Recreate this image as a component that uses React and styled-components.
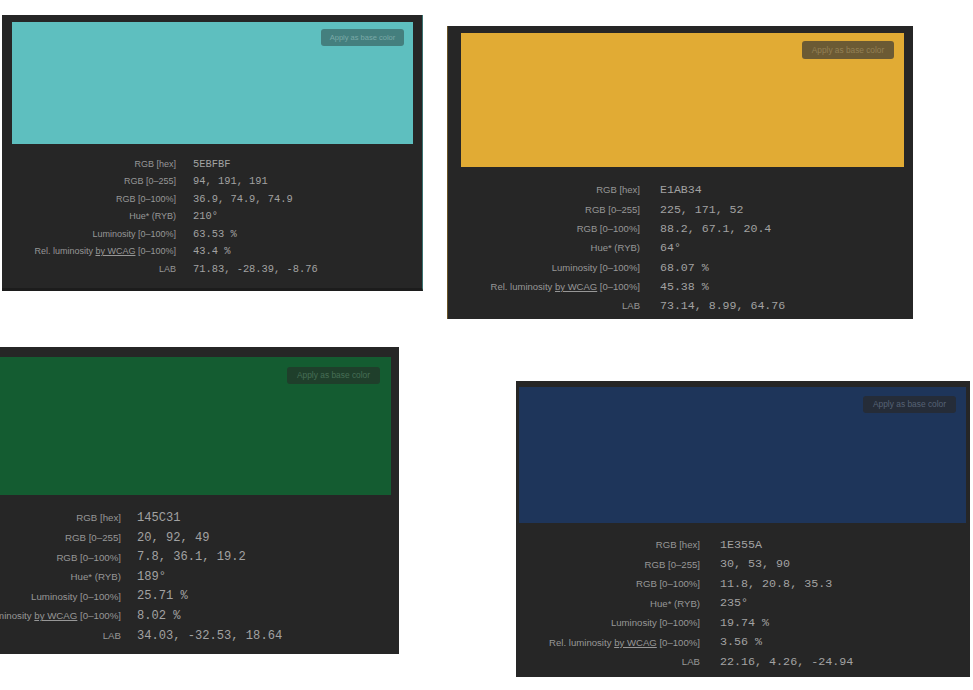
import React from 'react';
import styled, { createGlobalStyle } from 'styled-components';

const GlobalStyle = createGlobalStyle`
    html, body {
        margin: 0;
        padding: 0;
        background: #ffffff;
        width: 973px;
        height: 690px;
        overflow: hidden;
    }
    * { box-sizing: border-box; }
`

const Page = styled.div`
    display: flex;
    flex-direction: column;
    width: 973px;
    height: 690px;
`

const Row = styled.div`
    display: flex;
    align-items: flex-start;
`

const Panel = styled.div`
    flex: none;
    display: flex;
    flex-direction: column;
    background: #262626;
    margin: ${({ $mt }) => $mt}px 0 0 ${({ $ml }) => $ml}px;
    padding: ${({ $pad }) => $pad};
    border-left: ${({ $edgeL }) => $edgeL || 'none'};
    border-right: ${({ $edgeR }) => $edgeR || 'none'};
    border-bottom: ${({ $edgeB }) => $edgeB || 'none'};
`

const Swatch = styled.div`
    display: flex;
    justify-content: flex-end;
    align-items: flex-start;
    width: ${({ $w }) => $w}px;
    height: ${({ $h }) => $h}px;
    background: ${({ $color }) => $color};
    padding: ${({ $btnTop }) => $btnTop}px ${({ $btnRight }) => $btnRight}px 0 0;
`

const ApplyButton = styled.button`
    width: ${({ $w }) => $w}px;
    height: ${({ $h }) => $h}px;
    padding: 0;
    border: none;
    border-radius: 3px;
    background: ${({ $bg }) => $bg};
    color: ${({ $fg }) => $fg};
    font-family: "Liberation Sans", Arial, sans-serif;
    font-size: ${({ $fs }) => $fs}px;
    white-space: nowrap;
    cursor: pointer;
`

const Info = styled.div`
    display: grid;
    grid-template-columns: ${({ $labelW }) => $labelW}px 1fr;
    grid-auto-rows: ${({ $rowH }) => $rowH}px;
    column-gap: ${({ $gap }) => $gap}px;
    padding-top: ${({ $top }) => $top}px;
    align-items: center;
`

const Label = styled.div`
    text-align: right;
    white-space: nowrap;
    color: #979797;
    font-family: "Liberation Sans", Arial, sans-serif;
    font-size: ${({ $fs }) => $fs}px;
    u { text-underline-offset: 1px; }
`

const Value = styled.div`
    white-space: pre;
    color: #a2a2a2;
    font-family: "Liberation Mono", "DejaVu Sans Mono", monospace;
    font-size: ${({ $fs }) => $fs}px;
`

const cards = [
    {
        hex: '5EBFBF', color: '#5EBFBF',
        rgb: '94, 191, 191', pct: '36.9, 74.9, 74.9', hue: '210°',
        lum: '63.53 %', rel: '43.4 %', lab: '71.83, -28.39, -8.76',
        mt: 15, ml: 2, pad: '7px 9px 10px 10px',
        edgeR: '1px solid #3b7372', edgeB: '3px solid #1c1c1c',
        sw: 401, sh: 122, btnTop: 7, btnRight: 9,
        bw: 83, bh: 17, bfs: 7.5, bbg: '#447f7e', bfg: '#7aa9a7',
        labelW: 164, gap: 17, rowH: 17.5, infoTop: 11, lfs: 9, vfs: 10.4,
    },
    {
        hex: 'E1AB34', color: '#E1AB34',
        rgb: '225, 171, 52', pct: '88.2, 67.1, 20.4', hue: '64°',
        lum: '68.07 %', rel: '45.38 %', lab: '73.14, 8.99, 64.76',
        mt: 26, ml: 24, pad: '7px 9px 3.6px 13px',
        edgeL: '1px solid #6a5426',
        sw: 443, sh: 134, btnTop: 8, btnRight: 10,
        bw: 92, bh: 18, bfs: 8.3, bbg: '#6b5a34', bfg: '#938055',
        labelW: 179, gap: 20, rowH: 19.3, infoTop: 13.3, lfs: 9.5, vfs: 11.6,
    },
    {
        hex: '145C31', color: '#145C31',
        rgb: '20, 92, 49', pct: '7.8, 36.1, 19.2', hue: '189°',
        lum: '25.71 %', rel: '8.02 %', lab: '34.03, -32.53, 18.64',
        mt: 28, ml: -68, pad: '10px 8px 8.6px 10px',
        sw: 449, sh: 138, btnTop: 10, btnRight: 11,
        bw: 93, bh: 17, bfs: 8.4, bbg: '#1f3f2b', bfg: '#466e55',
        labelW: 179, gap: 16, rowH: 19.6, infoTop: 13.2, lfs: 9.7, vfs: 12.1,
    },
    {
        hex: '1E355A', color: '#1E355A',
        rgb: '30, 53, 90', pct: '11.8, 20.8, 35.3', hue: '235°',
        lum: '19.74 %', rel: '3.56 %', lab: '22.16, 4.26, -24.94',
        mt: 62, ml: 117, pad: '6px 4px 5.25px 3px',
        sw: 447, sh: 136, btnTop: 9, btnRight: 10,
        bw: 93, bh: 17, bfs: 8.4, bbg: '#252c38', bfg: '#566275',
        labelW: 181, gap: 20, rowH: 19.5, infoTop: 12.25, lfs: 9.6, vfs: 11.7,
    },
];

function ColorCard({ c }) {
    const rows = [
        ['RGB [hex]', c.hex],
        ['RGB [0–255]', c.rgb],
        ['RGB [0–100%]', c.pct],
        ['Hue* (RYB)', c.hue],
        ['Luminosity [0–100%]', c.lum],
        ['rel', c.rel],
        ['LAB', c.lab],
    ];

    return (
        <Panel $mt={c.mt} $ml={c.ml} $pad={c.pad} $edgeL={c.edgeL} $edgeR={c.edgeR} $edgeB={c.edgeB}>
            <Swatch $w={c.sw} $h={c.sh} $color={c.color} $btnTop={c.btnTop} $btnRight={c.btnRight}>
                <ApplyButton $w={c.bw} $h={c.bh} $fs={c.bfs} $bg={c.bbg} $fg={c.bfg}>
                    Apply as base color
                </ApplyButton>
            </Swatch>
            <Info $labelW={c.labelW} $gap={c.gap} $rowH={c.rowH} $top={c.infoTop}>
                {rows.map(([label, value]) => (
                    <React.Fragment key={label}>
                        <Label $fs={c.lfs}>
                            {label === 'rel'
                                ? <>Rel. luminosity <u>by WCAG</u> [0–100%]</>
                                : label}
                        </Label>
                        <Value $fs={c.vfs}>{value}</Value>
                    </React.Fragment>
                ))}
            </Info>
        </Panel>
    )
}

function App() {
    return (
        <>
            <GlobalStyle />
            <Page>
                <Row>
                    <ColorCard c={cards[0]} />
                    <ColorCard c={cards[1]} />
                </Row>
                <Row>
                    <ColorCard c={cards[2]} />
                    <ColorCard c={cards[3]} />
                </Row>
            </Page>
        </>
    )
}

export default App
